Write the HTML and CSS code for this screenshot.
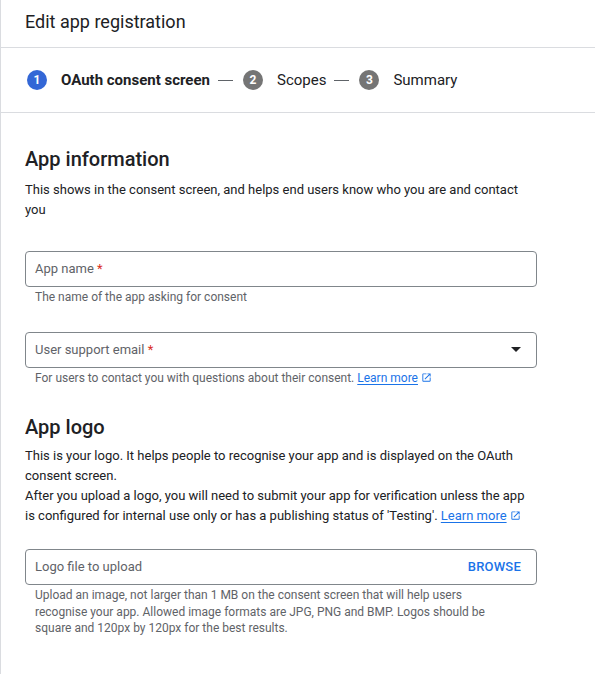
FILE: index.html
```html
<!DOCTYPE html>
<html>
<head>
<meta charset="utf-8">
<link rel="stylesheet" href="styles.css">
</head>
<body>
<div class="page">
  <header class="topbar">
    <h1 class="title">Edit app registration</h1>
  </header>
  <nav class="stepper">
    <span class="step-num active">1</span>
    <span class="step-label current">OAuth consent screen</span>
    <span class="step-dash"></span>
    <span class="step-num">2</span>
    <span class="step-label">Scopes</span>
    <span class="step-dash"></span>
    <span class="step-num">3</span>
    <span class="step-label">Summary</span>
  </nav>
  <main class="content">
    <section class="section">
      <h2 class="section-title">App information</h2>
      <p class="section-desc">This shows in the consent screen, and helps end users know who you are and contact you</p>

      <div class="field field-first">
        <div class="input">
          <span class="placeholder">App name <span class="req">*</span></span>
        </div>
        <div class="hint">The name of the app asking for consent</div>
      </div>

      <div class="field">
        <div class="input">
          <span class="placeholder">User support email <span class="req">*</span></span>
          <svg class="caret" width="10" height="5" viewBox="0 0 10 5"><path d="M0 0h10L5 5z" fill="#202124"/></svg>
        </div>
        <div class="hint">For users to contact you with questions about their consent. <a class="link" href="#">Learn more</a><svg class="ext" width="11" height="11" viewBox="0 0 24 24"><path d="M19 19H5V5h7V3H5a2 2 0 0 0-2 2v14a2 2 0 0 0 2 2h14c1.1 0 2-.9 2-2v-7h-2v7zM14 3v2h3.59l-9.83 9.83 1.41 1.41L19 6.41V10h2V3h-7z" fill="#1a73e8"/></svg></div>
      </div>
    </section>

    <section class="section section-logo">
      <h2 class="section-title">App logo</h2>
      <p class="section-desc tight">This is your logo. It helps people to recognise your app and is displayed on the OAuth consent screen.<br>After you upload a logo, you will need to submit your app for verification unless the app is configured for internal use only or has a publishing status of 'Testing'. <a class="link" href="#">Learn more</a><svg class="ext" width="11" height="11" viewBox="0 0 24 24"><path d="M19 19H5V5h7V3H5a2 2 0 0 0-2 2v14a2 2 0 0 0 2 2h14c1.1 0 2-.9 2-2v-7h-2v7zM14 3v2h3.59l-9.83 9.83 1.41 1.41L19 6.41V10h2V3h-7z" fill="#1a73e8"/></svg></p>

      <div class="field field-logo">
        <div class="input">
          <span class="placeholder">Logo file to upload</span>
          <span class="browse">BROWSE</span>
        </div>
        <div class="hint multi">Upload an image, not larger than 1 MB on the consent screen that will help users recognise your app. Allowed image formats are JPG, PNG and BMP. Logos should be square and 120px by 120px for the best results.</div>
      </div>
    </section>
  </main>
</div>
</body>
</html>
```
FILE: styles.css
```css
html, body {
  margin: 0;
  padding: 0;
  background: #ffffff;
}
body {
  font-family: Roboto, "Liberation Sans", Arial, sans-serif;
  color: #202124;
}
.page {
  border-left: 1px solid #dadce0;
  min-height: 674px;
  box-sizing: border-box;
}
.topbar {
  height: 47px;
  border-bottom: 1px solid #dadce0;
  display: flex;
  align-items: center;
  padding-left: 24px;
}
.title {
  margin: 0;
  font-size: 18px;
  font-weight: 400;
  line-height: 24px;
  position: relative;
  top: -2px;
}
.stepper {
  height: 64px;
  border-bottom: 1px solid #dadce0;
  display: flex;
  align-items: center;
  padding-left: 26px;
  font-size: 15px;
}
.step-num {
  width: 20px;
  height: 20px;
  border-radius: 50%;
  background: #757575;
  color: #fff;
  font-size: 12px;
  font-weight: 700;
  display: flex;
  align-items: center;
  justify-content: center;
  line-height: 1;
}
.step-num.active {
  background: #3367d6;
}
.step-label {
  margin-left: 14px;
  color: #202124;
}
.step-label.current {
  font-weight: 700;
}
.step-dash {
  width: 15px;
  height: 1px;
  background: #5f6368;
  margin: 0 10px 0 8px;
}
.content {
  padding: 32px 0 0 24px;
}
.section-title {
  margin: 0;
  font-size: 20px;
  font-weight: 500;
  line-height: 28px;
}
.section-desc {
  margin: 7px 0 0;
  font-size: 13px;
  line-height: 20px;
  max-width: 512px;
}
.section-desc.tight {
  margin-top: 5px;
}
.field {
  width: 512px;
  margin-top: 27px;
}
.field-first {
  margin-top: 31px;
}
.field-logo {
  margin-top: 23px;
}
.input {
  height: 36px;
  box-sizing: border-box;
  border: 1px solid #80868b;
  border-radius: 4px;
  display: flex;
  align-items: center;
  justify-content: space-between;
  padding: 0 15px 1px 9px;
}
.placeholder {
  font-size: 13px;
  color: #5f6368;
}
.req {
  color: #d93025;
}
.caret {
  display: block;
}
.browse {
  font-size: 13px;
  font-weight: 500;
  color: #1a73e8;
  letter-spacing: 0.2px;
}
.hint {
  margin: 2px 0 0 10px;
  font-size: 12px;
  line-height: 16px;
  color: #5f6368;
}
.hint.multi {
  line-height: 16.5px;
  max-width: 460px;
}
.link {
  color: #1a73e8;
  text-decoration: underline;
  text-underline-offset: 2px;
}
.ext {
  vertical-align: -1px;
  margin-left: 3px;
}
.section-logo {
  margin-top: 27px;
}
```
